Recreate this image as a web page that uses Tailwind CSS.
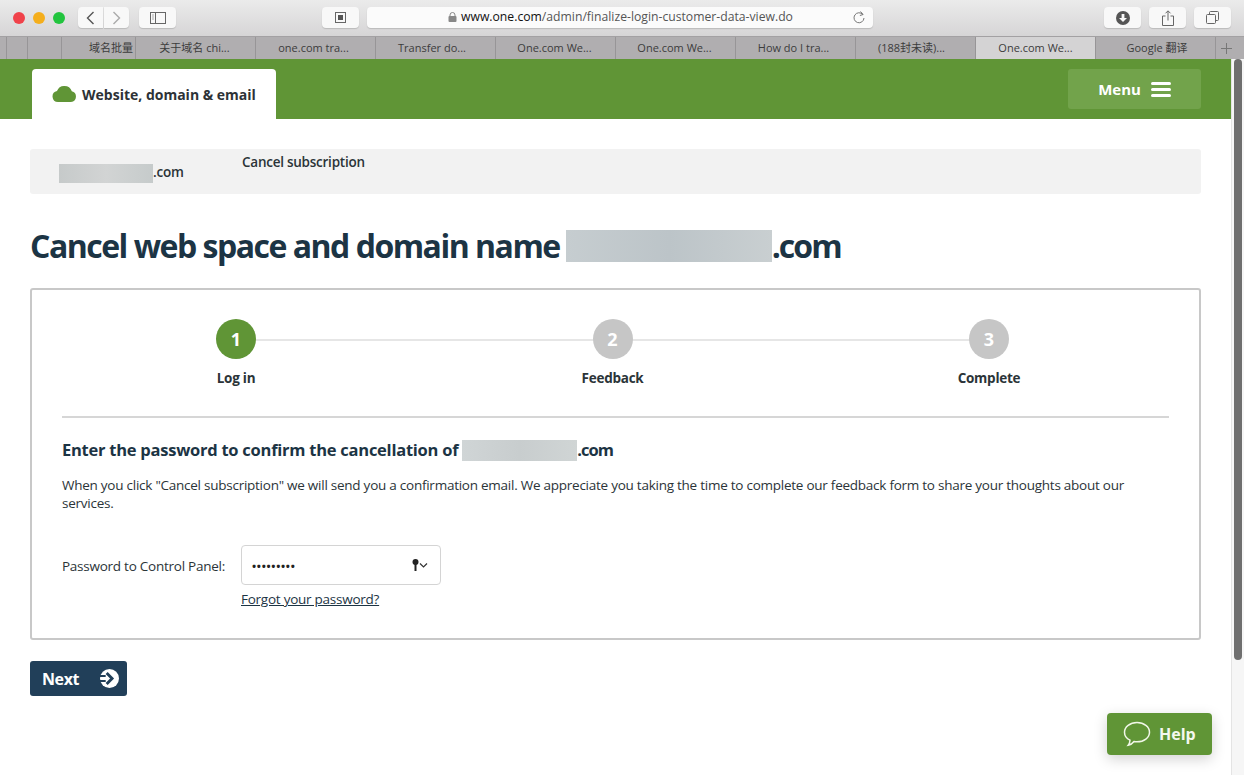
<!DOCTYPE html>
<html lang="en">
<head>
<meta charset="UTF-8">
<title>Cancel subscription</title>
<script src="https://cdn.jsdelivr.net/npm/@tailwindcss/browser@4"></script>
</head>
<body class="w-[1244px] h-[775px] overflow-hidden bg-white relative font-['Open_Sans','Noto_Sans_CJK_SC',sans-serif] text-[#2b3438]">

<!-- Safari toolbar -->
<div class="h-[36px] bg-gradient-to-b from-[#ebebeb] to-[#d6d5d6] flex items-center relative pb-[1px]">
  <div class="flex gap-[8px] ml-[13px] w-[52px]">
    <span class="w-[12px] h-[12px] rounded-full bg-[#f0424a]"></span>
    <span class="w-[12px] h-[12px] rounded-full bg-[#f4ae1c]"></span>
    <span class="w-[12px] h-[12px] rounded-full bg-[#22c43e]"></span>
  </div>
  <div class="ml-[13px] flex gap-px">
    <div class="w-[25px] h-[21px] bg-[#f8f8f8] rounded-l-[4px] shadow-[0_1px_1px_#bbb] flex items-center justify-center">
      <svg width="9" height="14" viewBox="0 0 9 14" fill="none" stroke="#555" stroke-width="1.4"><path d="M7.5 1 1.5 7l6 6"/></svg>
    </div>
    <div class="w-[25px] h-[21px] bg-[#f8f8f8] rounded-r-[4px] shadow-[0_1px_1px_#bbb] flex items-center justify-center">
      <svg width="9" height="14" viewBox="0 0 9 14" fill="none" stroke="#aaa" stroke-width="1.4"><path d="M1.5 1l6 6-6 6"/></svg>
    </div>
  </div>
  <div class="ml-[10px] w-[37px] h-[21px] bg-[#f8f8f8] rounded-[4px] shadow-[0_1px_1px_#bbb] flex items-center justify-center">
    <svg width="16" height="12" viewBox="0 0 16 12" fill="none" stroke="#666"><rect x=".5" y=".5" width="15" height="11"/><path d="M5.5 .5v11"/><path d="M2 3h2M2 5h2M2 7h2" stroke="#aaa"/></svg>
  </div>
  <div class="ml-[146px] w-[37px] h-[21px] bg-[#f8f8f8] rounded-[4px] shadow-[0_1px_1px_#bbb] flex items-center justify-center">
    <svg width="11" height="11" viewBox="0 0 11 11" fill="none"><rect x=".5" y=".5" width="10" height="10" stroke="#666"/><rect x="3" y="3" width="5" height="5" fill="#555"/></svg>
  </div>
  <div class="ml-[8px] w-[506px] h-[21px] bg-[#fbfbfb] rounded-[4px] shadow-[0_1px_1px_#bbb] flex items-center relative">
    <div class="ml-[81px] flex items-center text-[12.2px] leading-none">
      <svg width="9" height="10" viewBox="0 0 9 10" class="mr-[4px]"><path d="M2 4.5V3a2.5 2.5 0 0 1 5 0v1.5" fill="none" stroke="#888"/><rect x=".5" y="4" width="8" height="6" rx="1" fill="#888"/></svg>
      <span class="text-[#111] font-medium">www.one.com</span><span class="text-[#555]">/admin/finalize-login-customer-data-view.do</span>
    </div>
    <svg width="12" height="14" viewBox="0 0 12 14" fill="none" stroke="#777" class="absolute right-[8px] top-[3px]"><path d="M9.8 4.5A5 5 0 1 0 11 8"/><path d="M7.5 1.5l2.6 3-3.2 1" /></svg>
  </div>
  <div class="ml-[231px] w-[37px] h-[21px] bg-[#f8f8f8] rounded-[4px] shadow-[0_1px_1px_#bbb] flex items-center justify-center">
    <svg width="14" height="14" viewBox="0 0 14 14"><circle cx="7" cy="7" r="7" fill="#555"/><path d="M5.6 3h2.8v4H11L7 11 3 7h2.6z" fill="#f8f8f8"/></svg>
  </div>
  <div class="ml-[8px] w-[37px] h-[21px] bg-[#f8f8f8] rounded-[4px] shadow-[0_1px_1px_#bbb] flex items-center justify-center">
    <svg width="12" height="16" viewBox="0 0 12 16" fill="none" stroke="#666"><path d="M3.5 6H.5v9.500h11V6h-3"/><path d="M6 10.500V1M3.500 3.300 6 .8l2.500 2.500"/></svg>
  </div>
  <div class="ml-[8px] w-[37px] h-[21px] bg-[#f8f8f8] rounded-[4px] shadow-[0_1px_1px_#bbb] flex items-center justify-center">
    <svg width="13" height="13" viewBox="0 0 13 13" fill="none" stroke="#666"><rect x=".5" y="3.500" width="9" height="9" rx="1"/><path d="M3.500 3.500V1.500a1 1 0 0 1 1-1h7a1 1 0 0 1 1 1v7a1 1 0 0 1-1 1h-2"/></svg>
  </div>
</div>

<!-- Safari tab strip -->
<div class="h-[23px] bg-[#b0aeb0] flex text-[11px] leading-[22px] text-[#3c3c3c] border-t border-[#a3a1a3] text-center">
  <div class="w-[7px] border-r border-[#979597]"></div>
  <div class="w-[21px] border-r border-[#979597]"></div>
  <div class="w-[34px] border-r border-[#979597]"></div>
  <div class="w-[74px] border-r border-[#979597] whitespace-nowrap pl-[27px] text-left">域名批量</div>
  <div class="w-[120px] border-r border-[#979597] pr-[2px]">关于域名 chi...</div>
  <div class="w-[120px] border-r border-[#979597] pr-[4px]">one.com tra...</div>
  <div class="w-[120px] border-r border-[#979597] pr-[7px]">Transfer do...</div>
  <div class="w-[120px] border-r border-[#979597] pr-[2px]">One.com We...</div>
  <div class="w-[120px] border-r border-[#979597] pr-[2px]">One.com We...</div>
  <div class="w-[120px] border-r border-[#979597] pr-[4px]">How do I tra...</div>
  <div class="w-[120px] border-r border-[#979597] pr-[8px]">(188封未读)...</div>
  <div class="w-[120px] bg-[#d4d3d4] border-r border-[#979597]">One.com We...</div>
  <div class="w-[120px] border-r border-[#979597] pl-[3px]">Google 翻译</div>
  <div class="flex-1 flex items-center justify-center pr-[7px]">
    <svg width="13" height="13" viewBox="0 0 13 13" stroke="#777"><path d="M6.500 1v11M1 6.500h11"/></svg>
  </div>
</div>

<div class="flex h-[716px]">
  <!-- Page -->
  <div class="w-[1231px] relative">
    <header class="h-[60px] bg-[#609536] flex items-end justify-between px-[30px]">
      <div class="ml-[2px] w-[244px] h-[50px] bg-white rounded-t-[4px] flex items-center pl-[20px]">
        <svg width="25" height="16" viewBox="0 0 25 16" fill="#609536"><path d="M6 16a5.500 5.500 0 0 1-1-10.900A7.800 7.800 0 0 1 12.500 0a7.800 7.800 0 0 1 7.300 5.200A5.500 5.500 0 0 1 19 16z"/></svg>
        <span class="ml-[5px] text-[14px] font-bold text-[#2d3236] whitespace-nowrap">Website, domain &amp; email</span>
      </div>
      <div class="self-start mt-[10px] w-[133px] h-[40px] bg-[#72a34b] rounded-[3px] flex items-center justify-center text-white font-bold text-[15px]">
        Menu
        <svg width="20" height="15" viewBox="0 0 20 15" fill="#fff" class="ml-[10px]"><rect width="20" height="3" rx="1.500"/><rect y="6" width="20" height="3" rx="1.500"/><rect y="12" width="20" height="3" rx="1.500"/></svg>
      </div>
    </header>

    <main class="px-[30px]">
      <!-- Breadcrumb -->
      <div class="mt-[30px] h-[45px] bg-[#f2f2f2] rounded-[3px] flex text-[13.5px] tracking-[-0.25px] font-semibold text-[#2b3438]">
        <div class="w-[212px] pl-[29px] pt-[13px] flex items-start">
          <span class="w-[94px] h-[19px] mt-[2px] bg-gradient-to-r from-[#c6caca] via-[#d2d4d4] to-[#c6cbcb]"></span>
          <span class="leading-[20px]">.com</span>
        </div>
        <div class="pt-[3px] leading-[20px]">Cancel subscription</div>
      </div>

      <h1 class="mt-[32px] h-[40px] flex items-center text-[32px] font-bold tracking-[-1.500px] text-[#1c3444] whitespace-nowrap">
        Cancel web space and domain name
        <span class="ml-[6px] w-[206px] h-[32px] bg-gradient-to-r from-[#c6cdd0] via-[#bcc4c8] to-[#c9cfd1]"></span><span class="tracking-[-2px]">.com</span>
      </h1>

      <!-- Step card -->
      <section class="mt-[22px] h-[352px] border-2 border-[#c8c8c8] rounded-[3px] px-[30px]">
        <div class="h-[128px] border-b-2 border-[#d6d6d6] relative flex justify-between pl-[114px] pr-[120px] text-center">
          <div class="absolute left-[173px] right-[180px] top-[49px] h-[2px] bg-[#e6e6e6]"></div>
          <div class="relative w-[120px] pt-[29px]">
            <div class="mx-auto w-[40px] h-[40px] rounded-full bg-[#609536] text-white font-bold text-[18px] leading-[40px]">1</div>
            <div class="mt-[9px] text-[13.5px] tracking-[-0.25px] font-bold leading-[20px]">Log in</div>
          </div>
          <div class="relative w-[120px] pt-[29px]">
            <div class="mx-auto w-[40px] h-[40px] rounded-full bg-[#c6c6c6] text-white font-bold text-[18px] leading-[40px]">2</div>
            <div class="mt-[9px] text-[13.5px] tracking-[-0.25px] font-bold leading-[20px]">Feedback</div>
          </div>
          <div class="relative w-[120px] pt-[29px]">
            <div class="mx-auto w-[40px] h-[40px] rounded-full bg-[#c6c6c6] text-white font-bold text-[18px] leading-[40px]">3</div>
            <div class="mt-[9px] text-[13.5px] tracking-[-0.25px] font-bold leading-[20px]">Complete</div>
          </div>
        </div>

        <h2 class="mt-[20px] h-[24px] flex items-center text-[16.5px] tracking-[-0.25px] font-bold text-[#1c3444] whitespace-nowrap">
          Enter the password to confirm the cancellation of
          <span class="ml-[4px] w-[115px] h-[21px] bg-gradient-to-r from-[#d0d5d6] via-[#c8cdce] to-[#d0d5d5]"></span><span class="tracking-[-1px]">.com</span>
        </h2>
        <p class="mt-[14px] text-[13.5px] tracking-[-0.25px] leading-[18px] text-[#2b3438]">When you click "Cancel subscription" we will send you a confirmation email. We appreciate you taking the time to complete our feedback form to share your thoughts about our services.</p>

        <div class="mt-[33px] flex items-center text-[13.5px] tracking-[-0.25px]">
          <label class="w-[179px] whitespace-nowrap pt-[2px]">Password to Control Panel:</label>
          <div class="w-[200px] h-[40px] border border-[#d4d4d4] rounded-[4px] flex items-center justify-between pl-[10px] pr-[12px]">
            <span class="text-[11px] tracking-[0.7px] font-bold leading-none text-[#222]">•••••••••</span>
            <svg width="16" height="12" viewBox="0 0 16 12">
              <circle cx="3.500" cy="3" r="3" fill="#222"/><rect x="2.500" y="4" width="2" height="8" fill="#222"/>
              <path d="M8 4.500l3.500 3.500 3.500-3.500" fill="none" stroke="#333" stroke-width="1.200"/>
            </svg>
          </div>
        </div>
        <a class="block ml-[179px] mt-[4px] text-[13.5px] tracking-[-0.25px] leading-[20px] underline text-[#1c3444]">Forgot your password?</a>
      </section>

      <button class="mt-[21px] w-[97px] h-[35px] bg-[#213f59] rounded-[3px] flex items-center justify-between pl-[12px] pr-[8px] text-white font-bold text-[16px] tracking-[-0.4px]">
        Next
        <svg width="19" height="19" viewBox="0 0 20 20"><circle cx="10" cy="10" r="10" fill="#fff"/><path d="M-1 7.300h7M-1 12.700h7" stroke="#213f59" stroke-width="2.200"/><path d="M7 4.300 12.700 10 7 15.700" fill="none" stroke="#213f59" stroke-width="3"/></svg>
      </button>
    </main>

    <!-- Help widget floats over the page -->
    <div class="absolute left-[1107px] top-[654px] w-[105px] h-[42px] bg-[#609536] rounded-[4px] shadow-[0_4px_14px_rgba(0,0,0,0.18)] flex items-center pl-[16px] text-[#f4f8ef] font-bold text-[16px]">
      <svg width="28" height="26" viewBox="0 0 28 26" fill="none" stroke="#f1f7e8" stroke-width="1.500"><path d="M14 1.500c7 0 12.500 4.200 12.500 9.700S21 20.800 14 20.800c-1 0-2-.1-3-.3-1.500 2-3.500 3.300-5.800 3.700 1-1.300 1.700-2.800 1.800-5C3.500 17.500 1.500 14.500 1.500 11.200 1.500 5.700 7 1.500 14 1.500z"/></svg>
      <span class="ml-[8px]">Help</span>
    </div>
  </div>

  <!-- Scrollbar -->
  <div class="w-[13px] bg-[#f6f6f6] border-l border-[#e4e4e4] pl-[2px]">
    <div class="w-[8px] h-[601px] bg-[#6f6f6f] rounded-[4px]"></div>
  </div>
</div>
</body>
</html>
